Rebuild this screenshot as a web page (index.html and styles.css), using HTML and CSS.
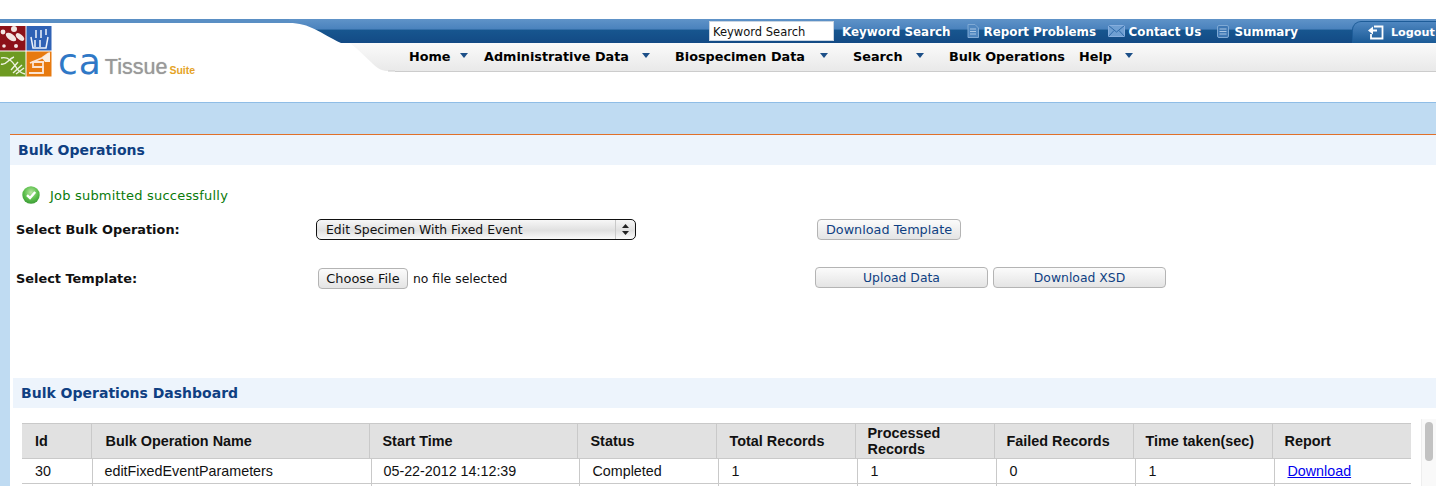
FILE: index.html
```html
<!DOCTYPE html>
<html>
<head>
	<meta charset="utf-8">
	<title>caTissue Suite - Bulk Operations</title>
	<link rel="stylesheet" href="styles.css">
</head>
<body>
	<div id="header">
		<div class="brand">
			<svg class="brand-curves" width="395" height="53" viewBox="0 0 395 53">
				<defs>
					<linearGradient id="blueBand" x1="0" y1="0" x2="0" y2="1">
						<stop offset="0" stop-color="#5f93c8"/>
						<stop offset="0.42" stop-color="#4a82bd"/>
						<stop offset="0.46" stop-color="#17568f"/>
						<stop offset="1" stop-color="#134a85"/>
					</linearGradient>
					<linearGradient id="greyBand" x1="0" y1="0" x2="0" y2="1">
						<stop offset="0" stop-color="#fafafa"/>
						<stop offset="1" stop-color="#e9e9e9"/>
					</linearGradient>
				</defs>
				<path d="M350 24 H395 V52 H388 C376 52 372 42 350 24Z" fill="url(#greyBand)"/>
				<path d="M388 52 H395" stroke="#cccccc" stroke-width="1"/>
				<rect width="395" height="4" fill="#5a8fc4"/>
				<path d="M289 4 C310 4 320 14 341 24 H395 V0 H289Z" fill="url(#blueBand)"/>
			</svg>
			<div class="logo">
				<svg class="logo-tiles" width="52" height="52" viewBox="0 0 52 52">
					<rect x="0" y="0" width="25.5" height="24.5" fill="#8c1118"/>
					<g fill="#f3e6e2">
						<ellipse cx="11" cy="11" rx="6" ry="3" transform="rotate(35 11 11)"/>
						<ellipse cx="20" cy="11" rx="5" ry="2.6" transform="rotate(40 20 11)"/>
						<circle cx="14" cy="3" r="3"/>
						<circle cx="3" cy="6" r="2.4"/>
						<circle cx="16" cy="20" r="2"/>
						<circle cx="4" cy="20" r="1.8"/>
					</g>
					<rect x="26.5" y="0" width="25" height="24.5" fill="#2f62b5"/>
					<g fill="none" stroke="#eef3fa" stroke-width="1.5">
						<path d="M31 11 L33 22 H46 L48 11"/>
						<path d="M36 4 V12 M41 4 V12 M46 3 V9 M35 14 V21 M40 14 V21"/>
					</g>
					<rect x="0" y="25.5" width="25.5" height="25" fill="#6d9a22"/>
					<g fill="none" stroke="#eef2e0" stroke-width="1.4">
						<path d="M1 32 C8 30 13 36 16 41 C18 45 21 47 25 48"/>
						<path d="M1 38 C6 40 8 33 14 31"/>
						<path d="M13 47 L22 39 M16 48 L24 42 M11 44 L18 36"/>
					</g>
					<rect x="26.5" y="25.5" width="25" height="25" fill="#e77a10"/>
					<g fill="none" stroke="#fbe3d2" stroke-width="1.8">
						<path d="M30 37 L42 32 L49 27"/>
						<path d="M44 36 H33 V41 H43 V47 H29"/>
						<path d="M43 36 V47"/>
					</g>
					<path d="M42 32 L50 26 V36 H45Z" fill="#fbeee3"/>
				</svg>
				<span class="logo-ca">ca</span>
				<span class="logo-tissue">Tissue</span>
				<span class="logo-suite">Suite</span>
			</div>
		</div>
		<div class="bars">
			<div class="top-bar">
				<input class="keyword" type="text" value="Keyword Search">
				<a class="top-link link-search">Keyword Search</a>
				<svg class="top-icon icon-report" width="12" height="14" viewBox="0 0 12 14">
					<path d="M1 .5 H8 L11.5 4 V13.5 H1Z" fill="#4f86bf" stroke="#7fa9d4"/>
					<path d="M3 5 H9 M3 7.5 H9 M3 10 H9" stroke="#a9c6e4"/>
				</svg>
				<a class="top-link link-report">Report Problems</a>
				<svg class="top-icon icon-mail" width="17" height="12" viewBox="0 0 17 12">
					<rect x=".5" y=".5" width="16" height="11" fill="#6f9fd2" stroke="#86aede"/>
					<path d="M.5 .5 L8.5 7 L16.5 .5 M.5 11.5 L6 5.5 M16.5 11.5 L11 5.5" fill="none" stroke="#2f6aa8"/>
				</svg>
				<a class="top-link link-contact">Contact Us</a>
				<svg class="top-icon icon-summary" width="12" height="13" viewBox="0 0 12 13">
					<rect x=".5" y=".5" width="11" height="12" rx="1.5" fill="#3f78b4" stroke="#7fa9d4"/>
					<path d="M2.5 4 H9.5 M2.5 6.5 H9.5 M2.5 9 H9.5" stroke="#a9c6e4"/>
				</svg>
				<a class="top-link link-summary">Summary</a>
				<div class="logout">
					<svg width="16" height="15" viewBox="0 0 16 15">
						<path d="M6 1.5 H14.5 V13.5 H3 V9" fill="none" stroke="#ffffff" stroke-width="1.8"/>
						<path d="M0 5.5 L5 1.5 V9.5Z M4 4.5 H9 V6.5 H4Z" fill="#ffffff"/>
					</svg>
					<span>Logout</span>
				</div>
			</div>
			<div class="nav">
				<span class="nav-item item-home">Home</span><i class="caret caret-home"></i>
				<span class="nav-item item-admin">Administrative Data</span><i class="caret caret-admin"></i>
				<span class="nav-item item-bio">Biospecimen Data</span><i class="caret caret-bio"></i>
				<span class="nav-item item-search">Search</span><i class="caret caret-search"></i>
				<span class="nav-item item-bulk">Bulk Operations</span>
				<span class="nav-item item-help">Help</span><i class="caret caret-help"></i>
			</div>
		</div>
	</div>

	<div id="main">
		<div class="panel">
			<div class="panel-title">Bulk Operations</div>

			<div class="message">
				<svg width="18" height="18" viewBox="0 0 18 18">
					<defs>
						<radialGradient id="okBall" cx="50%" cy="35%" r="65%">
							<stop offset="0" stop-color="#b5e6a0"/>
							<stop offset="0.6" stop-color="#5cbf4c"/>
							<stop offset="1" stop-color="#3c9c36"/>
						</radialGradient>
					</defs>
					<circle cx="9" cy="9" r="8.7" fill="url(#okBall)"/>
					<path d="M5 9.2 L8 12 L13.2 6" fill="none" stroke="#ffffff" stroke-width="2.4"/>
				</svg>
				<span>Job submitted successfully</span>
			</div>

			<div class="form-row row-op">
				<label class="form-label">Select Bulk Operation:</label>
				<div class="select-wrap">
					<select class="op-select">
						<option>Edit Specimen With Fixed Event</option>
					</select>
					<svg class="select-arrows" width="7" height="11" viewBox="0 0 7 11">
						<path d="M3.5 0 L7 4 H0Z M3.5 11 L0 7 H7Z" fill="#222222"/>
					</svg>
				</div>
				<button class="btn btn-template">Download Template</button>
			</div>

			<div class="form-row row-file">
				<label class="form-label">Select Template:</label>
				<div class="file-field">
					<button class="file-btn">Choose File</button>
					<span>no file selected</span>
				</div>
				<div class="btn-group">
					<button class="btn btn-wide">Upload Data</button>
					<button class="btn btn-wide">Download XSD</button>
				</div>
			</div>

			<div class="panel-title dash-title">Bulk Operations Dashboard</div>

			<div class="dash">
				<div class="grid-wrap">
					<table class="grid grid-head">
						<colgroup>
							<col class="h1"><col class="h2"><col class="h3"><col class="h4"><col class="h5"><col class="h6"><col class="h7"><col class="h8"><col class="h9">
						</colgroup>
						<tr>
							<th>Id</th>
							<th class="th-name">Bulk Operation Name</th>
							<th class="th-wide">Start Time</th>
							<th class="th-wide">Status</th>
							<th class="th-wide">Total Records</th>
							<th>Processed Records</th>
							<th>Failed Records</th>
							<th>Time taken(sec)</th>
							<th>Report</th>
						</tr>
					</table>
					<table class="grid grid-body">
						<colgroup>
							<col class="b1"><col class="b2"><col class="b3"><col class="b4"><col class="b5"><col class="b6"><col class="b7"><col class="b8"><col class="b9">
						</colgroup>
						<tr>
							<td>30</td>
							<td>editFixedEventParameters</td>
							<td>05-22-2012 14:12:39</td>
							<td class="td-wide">Completed</td>
							<td class="td-wide">1</td>
							<td class="td-wide">1</td>
							<td class="td-wide">0</td>
							<td class="td-wide">1</td>
							<td class="td-wide"><a href="#">Download</a></td>
						</tr>
						<tr class="next-row">
							<td></td><td></td><td></td><td></td><td></td><td></td><td></td><td></td><td></td>
						</tr>
					</table>
				</div>
				<div class="scroll-track"><div class="scroll-thumb"></div></div>
			</div>
		</div>
	</div>
</body>
</html>
```

FILE: styles.css
```css
html, body {
	height: 486px;
	overflow: hidden;
}
body {
	margin: 0;
	background: #ffffff;
	font-family: "DejaVu Sans", Verdana, sans-serif;
	color: #111111;
}

/* header */
#header {
	display: flex;
	width: 1436px;
	height: 103px;
	padding-top: 19px;
	box-sizing: border-box;
	background: #ffffff;
	border-bottom: 1px solid #8fbde6;
}
.brand {
	position: relative;
	flex: 0 0 395px;
	height: 53px;
}
.brand-curves {
	position: absolute;
	top: 0;
	left: 0;
}
.logo {
	position: relative;
	display: flex;
	align-items: baseline;
	padding-top: 7px;
}
.logo-tiles {
	flex: none;
	align-self: flex-start;
	margin-right: 6px;
	filter: blur(0.4px);
}
.logo-ca {
	font-family: "DejaVu Sans", sans-serif;
	font-size: 36px;
	line-height: 72px;
	letter-spacing: 1px;
	color: #2f78c6;
	margin-right: 3px;
}
.logo-tissue {
	font-family: "Liberation Sans", sans-serif;
	font-size: 21.5px;
	color: #999999;
	text-shadow: 0 0 1px #aaaaaa;
	margin-right: 2px;
}
.logo-suite {
	font-family: "Liberation Sans", sans-serif;
	font-size: 10.5px;
	font-weight: bold;
	color: #e5a326;
}
.bars {
	flex: 1;
	min-width: 0;
}
.top-bar {
	display: flex;
	align-items: center;
	height: 24px;
	background: linear-gradient(#5f93c8 0, #4a82bd 42%, #17568f 46%, #134a85 100%);
	overflow: hidden;
}
.keyword {
	width: 125px;
	height: 20px;
	margin: 0 8px 0 314px;
	padding: 1px 3px 0;
	box-sizing: border-box;
	border: 1px solid #c9d5e2;
	background: #ffffff;
	font-family: "DejaVu Sans", sans-serif;
	font-size: 11.5px;
	color: #111111;
}
.top-link {
	padding-top: 1px;
	color: #ffffff;
	font-size: 11.9px;
	font-weight: bold;
	white-space: nowrap;
}
.top-icon {
	flex: none;
}
.link-search { width: 109px; margin-right: 16px; }
.icon-report { margin-right: 5px; }
.link-report { width: 111px; margin-right: 13px; }
.icon-mail { margin-right: 4px; }
.link-contact { width: 72px; margin-right: 16px; }
.icon-summary { margin-right: 6px; }
.link-summary { width: 66px; margin-right: 54px; }
.logout {
	display: flex;
	align-items: center;
	gap: 7px;
	flex: none;
	width: 110px;
	height: 22px;
	margin-top: 2px;
	padding-left: 15px;
	box-sizing: border-box;
	background: linear-gradient(#4f87c1, #1a5a96);
	border: 1px solid #1d5c98;
	border-bottom: none;
	border-radius: 9px 0 0 0;
	color: #ffffff;
	font-size: 11.2px;
	font-weight: bold;
}
.logout svg {
	flex: none;
}
.nav {
	display: flex;
	align-items: center;
	height: 29px;
	box-sizing: border-box;
	padding-bottom: 2px;
	background: linear-gradient(#fafafa, #e9e9e9);
	border-bottom: 1px solid #cccccc;
}
.nav-item {
	font-size: 12.8px;
	font-weight: bold;
	color: #000000;
	white-space: nowrap;
}
.caret {
	flex: none;
	width: 0;
	height: 0;
	border-left: 4px solid transparent;
	border-right: 4px solid transparent;
	border-top: 5px solid #1c4f88;
	margin-top: -2px;
}
.item-home { width: 43px; margin-left: 14px; margin-right: 8px; }
.caret-home { margin-right: 16px; }
.item-admin { width: 145px; margin-right: 13px; }
.caret-admin { margin-right: 25px; }
.item-bio { width: 131px; margin-right: 14px; }
.caret-bio { margin-right: 25px; }
.item-search { width: 50px; margin-right: 13px; }
.caret-search { margin-right: 25px; }
.item-bulk { width: 116px; margin-right: 14px; }
.item-help { width: 33px; margin-right: 13px; }

/* page body */
#main {
	height: 383px;
	padding: 31px 0 0 10px;
	box-sizing: border-box;
	background: #bfdbf2;
	overflow: hidden;
}
.panel {
	height: 352px;
	background: #ffffff;
	border-top: 1px solid #e0702a;
}
.panel-title {
	height: 30px;
	line-height: 30px;
	padding-left: 8px;
	background: #edf4fc;
	color: #0f3f82;
	font-size: 14px;
	font-weight: bold;
}
.message {
	display: flex;
	align-items: center;
	gap: 10px;
	height: 18px;
	margin: 21px 0 0 12px;
	color: #0a7a0a;
	font-size: 13px;
	letter-spacing: 0.2px;
}
.form-row {
	display: flex;
	align-items: center;
	padding-left: 6px;
}
.row-op {
	height: 22px;
	margin-top: 14px;
}
.row-file {
	height: 22px;
	margin-top: 27px;
}
.form-label {
	flex: 0 0 300px;
	font-size: 12.9px;
	font-weight: bold;
}
.select-wrap {
	position: relative;
	flex: 0 0 320px;
	height: 21px;
	margin-right: 181px;
}
.op-select {
	display: block;
	width: 100%;
	height: 21px;
	padding: 1px 0 0 9px;
	box-sizing: border-box;
	appearance: none;
	-webkit-appearance: none;
	border: 1px solid #111111;
	border-radius: 5px;
	background: linear-gradient(to right, transparent 298px, #c9c9c9 298px, #c9c9c9 299px, transparent 299px), linear-gradient(#f7f7f7, #e0e0e0 55%, #fafafa);
	font-family: "DejaVu Sans", sans-serif;
	font-size: 12.4px;
	color: #111111;
}
.select-arrows {
	position: absolute;
	top: 5px;
	right: 7px;
	pointer-events: none;
}
button {
	font-family: "DejaVu Sans", sans-serif;
	font-size: 12.4px;
	padding: 1px 0 0;
}
.btn {
	height: 21px;
	box-sizing: border-box;
	border: 1px solid #b4b4b4;
	border-radius: 4px;
	background: linear-gradient(#fbfbfb, #e4e4e4);
	color: #0f3f82;
}
.btn-template {
	width: 144px;
	font-size: 12.8px;
}
.file-field {
	display: flex;
	align-items: center;
	gap: 5px;
	flex: 0 0 497px;
	margin-left: 2px;
	font-size: 12.4px;
	color: #111111;
}
.file-btn {
	width: 90px;
	height: 21px;
	box-sizing: border-box;
	border: 1px solid #b4b4b4;
	border-radius: 4px;
	background: linear-gradient(#fbfbfb, #e4e4e4);
	color: #111111;
	font-size: 12.9px;
}
.btn-group {
	display: flex;
	gap: 5px;
	margin-top: -2px;
}
.btn-wide {
	width: 173px;
}
.dash-title {
	margin: 89px 0 0 3px;
}

/* dashboard table */
.dash {
	display: flex;
	padding: 11px 0 0 12px;
}
.grid-wrap {
	flex: 0 0 1389px;
	margin-top: 4px;
}
.grid {
	width: 1389px;
	border-collapse: collapse;
	table-layout: fixed;
	font-family: "Liberation Sans", Arial, sans-serif;
}
.grid th {
	height: 35px;
	padding: 0 0 0 12px;
	box-sizing: border-box;
	background: #e1e1e1;
	border: 1px solid #c9c9c9;
	text-align: left;
	font-size: 14.4px;
	line-height: 16px;
	color: #111111;
}
.grid td {
	height: 24px;
	padding: 0 0 0 12px;
	box-sizing: border-box;
	border: 1px solid #c9c9c9;
	border-top: none;
	font-size: 14.3px;
	color: #111111;
}
.grid .th-name { padding-left: 14px; }
.grid .th-wide,
.grid .td-wide { padding-left: 13px; }
.grid td:first-child,
.grid th:first-child {
	padding-left: 13px;
	border-left: none;
}
.grid td:last-child,
.grid th:last-child {
	border-right: none;
}
.h1 { width: 69px; }
.h2 { width: 278px; }
.h3 { width: 208px; }
.h4 { width: 139px; }
.h5 { width: 139px; }
.h6 { width: 139px; }
.h7 { width: 139px; }
.h8 { width: 139px; }
.h9 { width: 139px; }
.b1 { width: 70px; }
.b2 { width: 279px; }
.b3 { width: 208px; }
.b4 { width: 139px; }
.b5 { width: 139px; }
.b6 { width: 139px; }
.b7 { width: 139px; }
.b8 { width: 139px; }
.b9 { width: 137px; }
.grid a {
	color: #0000ee;
}
.scroll-track {
	flex: none;
	width: 15px;
	height: 70px;
	margin-left: 10px;
	background: #f9f9f9;
	border-left: 1px solid #eeeeee;
}
.scroll-thumb {
	width: 8px;
	height: 39px;
	margin: 3px 0 0 3px;
	background: #c2c2c2;
	border-radius: 4px;
}
```
